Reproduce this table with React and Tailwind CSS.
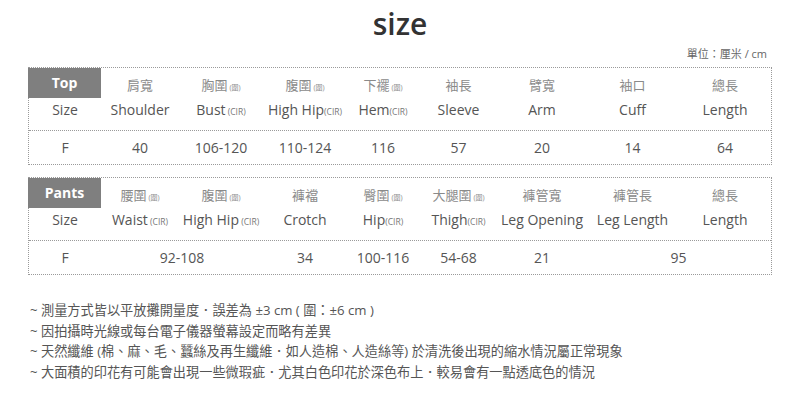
import React from 'react';

const FONT = { fontFamily: '"Open Sans", "Noto Sans CJK TC", sans-serif' };

const cols = 'grid grid-cols-[72px_78px_84px_84px_72px_79px_88px_93px_92px]';

const topCols = [
  { zh: '肩寬', en: 'Shoulder' },
  { zh: '胸圍', zhTag: true, en: 'Bust', enTag: ' (CIR)' },
  { zh: '腹圍', zhTag: true, en: 'High Hip', enTag: '(CIR)' },
  { zh: '下襬', zhTag: true, en: 'Hem', enTag: '(CIR)' },
  { zh: '袖長', en: 'Sleeve' },
  { zh: '臂寬', en: 'Arm' },
  { zh: '袖口', en: 'Cuff' },
  { zh: '總長', en: 'Length' },
];

const pantsCols = [
  { zh: '腰圍', zhTag: true, en: 'Waist', enTag: ' (CIR)' },
  { zh: '腹圍', zhTag: true, en: 'High Hip', enTag: ' (CIR)' },
  { zh: '褲襠', en: 'Crotch' },
  { zh: '臀圍', zhTag: true, en: 'Hip', enTag: '(CIR)' },
  { zh: '大腿圍', zhTag: true, en: 'Thigh', enTag: '(CIR)' },
  { zh: '褲管寬', en: 'Leg Opening' },
  { zh: '褲管長', en: 'Leg Length' },
  { zh: '總長', en: 'Length' },
];

const SizeTable = ({ label, columns, row, className = '' }) => (
  <div className={`mx-[28px] border border-dotted border-[#9a9a9a] ${className}`}>
    <div className="border-b border-dotted border-[#9a9a9a] pb-[10px]">
      <div className={`${cols} h-[30px] items-center`}>
        <div className="h-full -mt-px -ml-px bg-[#7f7f7f] text-white font-bold text-[14px] flex items-center justify-center">
          {label}
        </div>
        {columns.map((c, i) => (
          <div key={i} className="text-center text-[13px] text-[#8a8a8a] pt-[6px] whitespace-nowrap">
            {c.zh}
            {c.zhTag && <span className="text-[7px] ml-[2px]">(圍)</span>}
          </div>
        ))}
      </div>
      <div className={`${cols} h-[22px] items-center`}>
        <div className="text-center text-[14px] text-[#555]">Size</div>
        {columns.map((c, i) => (
          <div key={i} className="text-center text-[14px] text-[#555] whitespace-nowrap">
            {c.en}
            {c.enTag && <span className="text-[8.5px] text-[#777]">{c.enTag}</span>}
          </div>
        ))}
      </div>
    </div>
    <div className={`${cols} h-[33px] items-center text-[14px] text-[#555]`}>
      {row.map((v, i) => (
        <div key={i} className={`text-center ${v.span === 2 ? 'col-span-2' : ''}`}>{v.t}</div>
      ))}
    </div>
  </div>
);

const notes = [
  '~ 測量方式皆以平放攤開量度．誤差為 ±3 cm ( 圍：±6 cm )',
  '~ 因拍攝時光線或每台電子儀器螢幕設定而略有差異',
  '~ 天然纖維 (棉、麻、毛、蠶絲及再生纖維．如人造棉、人造絲等) 於清洗後出現的縮水情況屬正常現象',
  '~ 大面積的印花有可能會出現一些微瑕疵．尤其白色印花於深色布上．較易會有一點透底色的情況',
];

export default function App() {
  return (
    <div className="w-[800px] h-[411px] bg-white overflow-hidden" style={FONT}>
      <h1 className="text-center text-[30px] font-semibold text-[#333] leading-none pt-[9px] h-[44px]">size</h1>
      <div className="text-right pr-[33px] text-[11px] text-[#666] h-[23px] leading-[20px]">單位：厘米 / cm</div>
      <SizeTable
        label="Top"
        columns={topCols}
        row={[{ t: 'F' }, { t: '40' }, { t: '106-120' }, { t: '110-124' }, { t: '116' }, { t: '57' }, { t: '20' }, { t: '14' }, { t: '64' }]}
      />
      <SizeTable
        label="Pants"
        columns={pantsCols}
        className="mt-[12px]"
        row={[{ t: 'F' }, { t: '92-108', span: 2 }, { t: '34' }, { t: '100-116' }, { t: '54-68' }, { t: '21' }, { t: '95', span: 2 }]}
      />
      <div className="mt-[25px] ml-[30px] text-[13.2px] text-[#555] leading-[20.7px]">
        {notes.map((n, i) => (
          <div key={i}>{n}</div>
        ))}
      </div>
    </div>
  );
}
